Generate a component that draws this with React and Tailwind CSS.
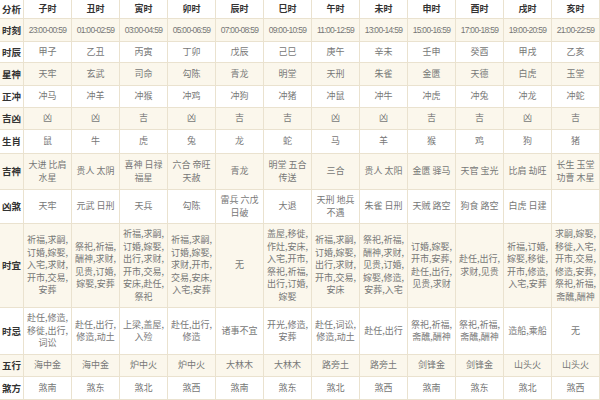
import React from 'react';

const FONT = { fontFamily: '"Noto Sans CJK SC", "Noto Sans", sans-serif' };

// one row per attribute, cells split into lines the way the source table wraps them
const rows = [
  { label: '分析', h: 'h-[19px]', bg: 'bg-white', head: true,
    cells: ['子时', '丑时', '寅时', '卯时', '辰时', '巳时', '午时', '未时', '申时', '酉时', '戌时', '亥时'] },
  { label: '时刻', h: 'h-[23px]', bg: 'bg-[#fbf7ec]', time: true,
    cells: ['23:00-00:59', '01:00-02:59', '03:00-04:59', '05:00-06:59', '07:00-08:59', '09:00-10:59', '11:00-12:59', '13:00-14:59', '15:00-16:59', '17:00-18:59', '19:00-20:59', '21:00-22:59'] },
  { label: '时辰', h: 'h-[21px]', bg: 'bg-white',
    cells: ['甲子', '乙丑', '丙寅', '丁卯', '戊辰', '己巳', '庚午', '辛未', '壬申', '癸酉', '甲戌', '乙亥'] },
  { label: '星神', h: 'h-[23px]', bg: 'bg-[#fbf7ec]',
    cells: ['天牢', '玄武', '司命', '勾陈', '青龙', '明堂', '天刑', '朱雀', '金匮', '天德', '白虎', '玉堂'] },
  { label: '正冲', h: 'h-[22px]', bg: 'bg-white',
    cells: ['冲马', '冲羊', '冲猴', '冲鸡', '冲狗', '冲猪', '冲鼠', '冲牛', '冲虎', '冲兔', '冲龙', '冲蛇'] },
  { label: '吉凶', h: 'h-[22px]', bg: 'bg-[#fbf7ec]',
    cells: ['凶', '凶', '吉', '凶', '吉', '吉', '凶', '凶', '吉', '吉', '凶', '吉'] },
  { label: '生肖', h: 'h-[24px]', bg: 'bg-white',
    cells: ['鼠', '牛', '虎', '兔', '龙', '蛇', '马', '羊', '猴', '鸡', '狗', '猪'] },
  { label: '吉神', h: 'h-[36px]', bg: 'bg-[#fbf7ec]',
    cells: [['大进 比肩', '水星'], '贵人 太阴', ['喜神 日禄', '福星'], ['六合 帝旺', '天赦'], '青龙', ['明堂 五合', '传送'], '三合', '贵人 太阳', '金匮 驿马', '天官 宝光', '比肩 劫旺', ['长生 玉堂', '功曹 木星']] },
  { label: '凶煞', h: 'h-[34px]', bg: 'bg-white',
    cells: ['天牢', '元武 日刑', '天兵', '勾陈', ['雷兵 六戊', '日破'], '大退', ['天刑 地兵', '不遇'], '朱雀 日刑', '天贼 路空', '狗食 路空', '白虎 日建', ''] },
  { label: '时宜', h: 'h-[84px]', bg: 'bg-[#fbf7ec]',
    cells: [
      ['祈福,求嗣,', '订婚,嫁娶,', '入宅,求财,', '开市,交易,', '安葬'],
      ['祭祀,祈福,', '酬神,求财,', '见贵,订婚,', '嫁娶,安葬'],
      ['祈福,求嗣,', '订婚,嫁娶,', '出行,求财,', '开市,交易,', '安床,赴任,', '祭祀'],
      ['祈福,求嗣,', '订婚,嫁娶,', '求财,开市,', '交易,安床,', '入宅,安葬'],
      '无',
      ['盖屋,移徙,', '作灶,安床,', '入宅,开市,', '祭祀,祈福,', '出行,订婚,', '嫁娶'],
      ['祈福,求嗣,', '订婚,嫁娶,', '出行,求财,', '开市,交易,', '安床'],
      ['祭祀,祈福,', '酬神,求财,', '见贵,订婚,', '嫁娶,修造,', '安葬,入宅'],
      ['订婚,嫁娶,', '开市,安葬,', '赴任,出行,', '见贵,求财'],
      ['赴任,出行,', '求财,见贵'],
      ['祈福,订婚,', '嫁娶,移徙,', '开市,修造,', '入宅,安葬'],
      ['求嗣,嫁娶,', '移徙,入宅,', '开市,交易,', '修造,安葬,', '祭祀,祈福,', '斋醮,酬神'],
    ] },
  { label: '时忌', h: 'h-[47px]', bg: 'bg-white',
    cells: [
      ['赴任,修造,', '移徙,出行,', '词讼'],
      ['赴任,出行,', '修造,动土'],
      ['上梁,盖屋,', '入殓'],
      ['赴任,出行,', '修造'],
      '诸事不宜',
      ['开光,修造,', '安葬'],
      ['赴任,词讼,', '修造,动土'],
      '赴任,出行',
      ['祭祀,祈福,', '斋醮,酬神'],
      ['祭祀,祈福,', '斋醮,酬神'],
      '造船,乘船',
      '无',
    ] },
  { label: '五行', h: 'h-[22px]', bg: 'bg-[#fbf7ec]',
    cells: ['海中金', '海中金', '炉中火', '炉中火', '大林木', '大林木', '路旁土', '路旁土', '剑锋金', '剑锋金', '山头火', '山头火'] },
  { label: '煞方', h: 'h-[23px]', bg: 'bg-white',
    cells: ['煞南', '煞东', '煞北', '煞西', '煞南', '煞东', '煞北', '煞西', '煞南', '煞东', '煞北', '煞西'] },
];

function Cell({ value, row }) {
  const lines = Array.isArray(value) ? value : [value];
  if (row.head) {
    return (
      <div className="flex items-center justify-center border-r border-b border-[#eae2cf] text-[9px] font-bold text-[#333]">
        {value}
      </div>
    );
  }
  if (row.time) {
    return (
      <div
        className="flex items-center justify-center border-r border-b border-[#eae2cf] text-[8.5px] tracking-[-0.7px] text-[#777] whitespace-nowrap"
        style={{ fontFamily: '"Liberation Sans", sans-serif' }}
      >
        {value}
      </div>
    );
  }
  return (
    <div className="flex flex-col items-center justify-center border-r border-b border-[#eae2cf] text-[9px] leading-[12.5px] text-[#777] whitespace-nowrap">
      {lines.map((l, i) => <span key={i}>{l}</span>)}
    </div>
  );
}

export default function App() {
  return (
    <div className="w-[600px] h-[400px] overflow-hidden bg-white" style={FONT}>
      {rows.map(row => (
        <div key={row.label} className={`grid grid-cols-[24px_repeat(12,minmax(0,1fr))] ${row.h} ${row.bg}`}>
          <div className="flex items-center justify-center border-r border-b border-[#eae2cf] text-[9.5px] font-bold text-[#333] whitespace-nowrap">
            {row.label}
          </div>
          {row.cells.map((c, i) => <Cell key={i} value={c} row={row} />)}
        </div>
      ))}
    </div>
  );
}
